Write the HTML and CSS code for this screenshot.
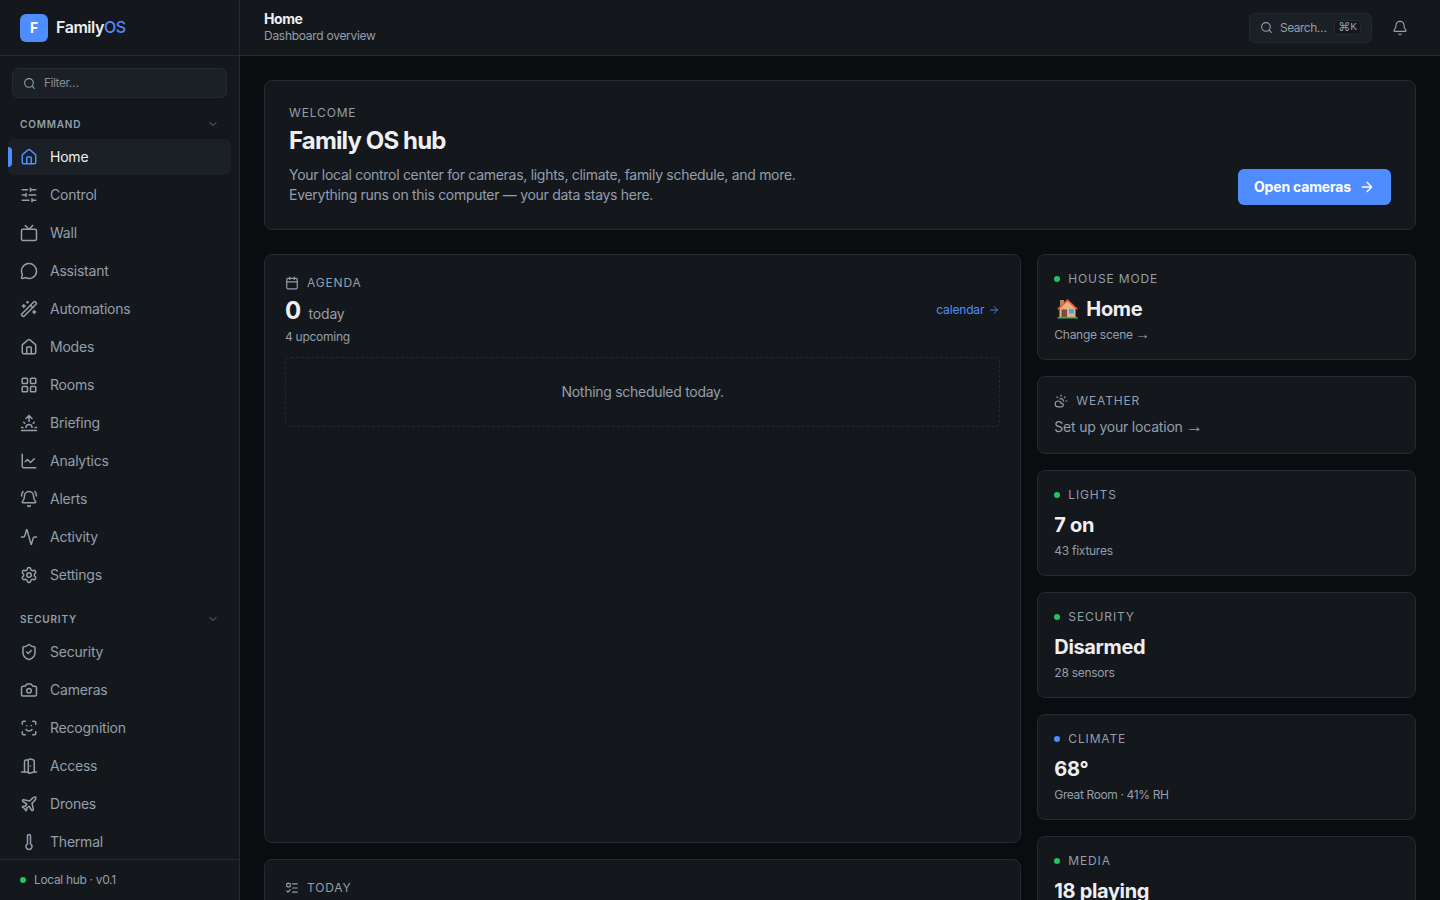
FILE: index.html
```html
<!DOCTYPE html>
<html lang="en">
<head>
<meta charset="utf-8">
<title>FamilyOS</title>
<link rel="stylesheet" href="styles.css">
</head>
<body>
<svg class="sprite" aria-hidden="true">
  <symbol id="search" viewBox="0 0 24 24"><path d="m21 21-4.34-4.34"/><circle cx="11" cy="11" r="8"/></symbol>
  <symbol id="chevron" viewBox="0 0 24 24"><path d="m6 9 6 6 6-6"/></symbol>
  <symbol id="arrow" viewBox="0 0 24 24"><path d="M5 12h14M12 5l7 7-7 7"/></symbol>
  <symbol id="bell" viewBox="0 0 24 24"><path d="M10.268 21a2 2 0 0 0 3.464 0"/><path d="M3.262 15.326A1 1 0 0 0 4 17h16a1 1 0 0 0 .74-1.673C19.41 13.956 18 12.499 18 8A6 6 0 0 0 6 8c0 4.499-1.411 5.956-2.738 7.326"/></symbol>
  <symbol id="house" viewBox="0 0 24 24"><path d="M15 21v-8a1 1 0 0 0-1-1h-4a1 1 0 0 0-1 1v8"/><path d="M3 10a2 2 0 0 1 .709-1.528l7-5.999a2 2 0 0 1 2.582 0l7 5.999A2 2 0 0 1 21 10v9a2 2 0 0 1-2 2H5a2 2 0 0 1-2-2z"/></symbol>
  <symbol id="sliders" viewBox="0 0 24 24"><path d="M10 5H3M12 19H3M14 3v4M16 17v4M21 12h-9M21 19h-5M21 5h-7M8 10v4M8 12H3"/></symbol>
  <symbol id="tv" viewBox="0 0 24 24"><path d="m17 2-5 5-5-5"/><rect x="2" y="7" width="20" height="15" rx="2"/></symbol>
  <symbol id="message" viewBox="0 0 24 24"><path d="M2.992 16.342a2 2 0 0 1 .094 1.167l-1.065 3.29a1 1 0 0 0 1.236 1.168l3.413-.998a2 2 0 0 1 1.099.092 10 10 0 1 0-4.777-4.719"/></symbol>
  <symbol id="wand" viewBox="0 0 24 24"><path d="m21.64 3.64-1.28-1.28a1.21 1.21 0 0 0-1.72 0L2.36 18.64a1.21 1.21 0 0 0 0 1.72l1.28 1.28a1.2 1.2 0 0 0 1.72 0L21.64 5.36a1.2 1.2 0 0 0 0-1.72"/><path d="m14 7 3 3M5 6v4M19 14v4M10 2v2M7 8H3M21 16h-4M11 3H9"/></symbol>
  <symbol id="grid" viewBox="0 0 24 24"><rect x="3" y="3" width="7" height="7" rx="1"/><rect x="14" y="3" width="7" height="7" rx="1"/><rect x="14" y="14" width="7" height="7" rx="1"/><rect x="3" y="14" width="7" height="7" rx="1"/></symbol>
  <symbol id="sunrise" viewBox="0 0 24 24"><path d="M12 2v8M4.93 10.93l1.41 1.41M2 18h2M20 18h2M19.07 10.93l-1.41 1.41M22 22H2M8 6l4-4 4 4M16 18a4 4 0 0 0-8 0"/></symbol>
  <symbol id="chart" viewBox="0 0 24 24"><path d="M3 3v16a2 2 0 0 0 2 2h16"/><path d="m19 9-5 5-4-4-3 3"/></symbol>
  <symbol id="bell-ring" viewBox="0 0 24 24"><path d="M10.268 21a2 2 0 0 0 3.464 0"/><path d="M22 8c0-2.3-.8-4.3-2-6"/><path d="M3.262 15.326A1 1 0 0 0 4 17h16a1 1 0 0 0 .74-1.673C19.41 13.956 18 12.499 18 8A6 6 0 0 0 6 8c0 4.499-1.411 5.956-2.738 7.326"/><path d="M4 2C2.8 3.7 2 5.7 2 8"/></symbol>
  <symbol id="activity" viewBox="0 0 24 24"><path d="M22 12h-2.48a2 2 0 0 0-1.93 1.46l-2.35 8.36a.25.25 0 0 1-.48 0L9.24 2.18a.25.25 0 0 0-.48 0l-2.35 8.36A2 2 0 0 1 4.49 12H2"/></symbol>
  <symbol id="settings" viewBox="0 0 24 24"><path d="M9.671 4.136a2.34 2.34 0 0 1 4.659 0 2.34 2.34 0 0 0 3.319 1.915 2.34 2.34 0 0 1 2.33 4.033 2.34 2.34 0 0 0 0 3.831 2.34 2.34 0 0 1-2.33 4.033 2.34 2.34 0 0 0-3.319 1.915 2.34 2.34 0 0 1-4.659 0 2.34 2.34 0 0 0-3.32-1.915 2.34 2.34 0 0 1-2.33-4.033 2.34 2.34 0 0 0 0-3.831A2.34 2.34 0 0 1 6.35 6.051a2.34 2.34 0 0 0 3.319-1.915"/><circle cx="12" cy="12" r="3"/></symbol>
  <symbol id="shield" viewBox="0 0 24 24"><path d="M20 13c0 5-3.5 7.5-7.66 8.95a1 1 0 0 1-.67-.01C7.5 20.5 4 18 4 13V6a1 1 0 0 1 1-1c2 0 4.5-1.2 6.24-2.72a1.17 1.17 0 0 1 1.52 0C14.51 3.81 17 5 19 5a1 1 0 0 1 1 1z"/><path d="m9 12 2 2 4-4"/></symbol>
  <symbol id="camera" viewBox="0 0 24 24"><path d="M13.997 4a2 2 0 0 1 1.76 1.05l.486.9A2 2 0 0 0 18.003 7H20a2 2 0 0 1 2 2v9a2 2 0 0 1-2 2H4a2 2 0 0 1-2-2V9a2 2 0 0 1 2-2h1.997a2 2 0 0 0 1.759-1.048l.489-.904A2 2 0 0 1 10.004 4z"/><circle cx="12" cy="13" r="3"/></symbol>
  <symbol id="scan-face" viewBox="0 0 24 24"><path d="M3 7V5a2 2 0 0 1 2-2h2M17 3h2a2 2 0 0 1 2 2v2M21 17v2a2 2 0 0 1-2 2h-2M7 21H5a2 2 0 0 1-2-2v-2M8 14s1.5 2 4 2 4-2 4-2M9 9h.01M15 9h.01"/></symbol>
  <symbol id="door" viewBox="0 0 24 24"><path d="M11 20H2"/><path d="M11 4.562v16.157a1 1 0 0 0 1.242.97L19 20V5.562a2 2 0 0 0-1.515-1.94l-4-1A2 2 0 0 0 11 4.561z"/><path d="M11 4H8a2 2 0 0 0-2 2v14M14 12h.01M22 20h-3"/></symbol>
  <symbol id="plane" viewBox="0 0 24 24"><path d="M17.8 19.2 16 11l3.5-3.5C21 6 21.5 4 21 3c-1-.5-3 0-4.5 1.5L13 8 4.8 6.2c-.5-.1-.9.1-1.1.5l-.3.5c-.2.5-.1 1 .3 1.3L9 12l-2 3H4l-1 1 3 2 2 3 1-1v-3l3-2 3.5 5.3c.3.4.8.5 1.3.3l.5-.2c.4-.3.6-.7.5-1.2z"/></symbol>
  <symbol id="thermometer" viewBox="0 0 24 24"><path d="M14 4v10.54a4 4 0 1 1-4 0V4a2 2 0 0 1 4 0Z"/></symbol>
  <symbol id="calendar" viewBox="0 0 24 24"><path d="M8 2v4M16 2v4"/><rect x="3" y="4" width="18" height="18" rx="2"/><path d="M3 10h18"/></symbol>
  <symbol id="cloud-sun" viewBox="0 0 24 24"><path d="M12 2v2M4.93 4.93l1.41 1.41M20 12h2M19.07 4.93l-1.41 1.41"/><path d="M15.947 12.65a4 4 0 0 0-5.925-4.128"/><path d="M13 22H7a5 5 0 1 1 4.9-6H13a3 3 0 0 1 0 6Z"/></symbol>
  <symbol id="list-todo" viewBox="0 0 24 24"><path d="M13 5h8M13 12h8M13 19h8M3 17l2 2 4-4"/><rect x="3" y="4" width="6" height="6" rx="1"/></symbol>
</svg>
<div class="app">
  <aside class="sidebar">
    <div class="brand"><span class="logo">F</span><span class="brand-name">Family<span class="brand-os">OS</span></span></div>
    <div class="filter"><svg class="icon icon-filter"><use href="#search"/></svg><span>Filter…</span></div>
    <nav class="nav">
      <div class="group-head"><span>COMMAND</span><svg class="icon icon-chevron"><use href="#chevron"/></svg></div>
      <a class="nav-item active"><svg class="icon"><use href="#house"/></svg>Home</a>
      <a class="nav-item"><svg class="icon"><use href="#sliders"/></svg>Control</a>
      <a class="nav-item"><svg class="icon"><use href="#tv"/></svg>Wall</a>
      <a class="nav-item"><svg class="icon"><use href="#message"/></svg>Assistant</a>
      <a class="nav-item"><svg class="icon"><use href="#wand"/></svg>Automations</a>
      <a class="nav-item"><svg class="icon"><use href="#house"/></svg>Modes</a>
      <a class="nav-item"><svg class="icon"><use href="#grid"/></svg>Rooms</a>
      <a class="nav-item"><svg class="icon"><use href="#sunrise"/></svg>Briefing</a>
      <a class="nav-item"><svg class="icon"><use href="#chart"/></svg>Analytics</a>
      <a class="nav-item"><svg class="icon"><use href="#bell-ring"/></svg>Alerts</a>
      <a class="nav-item"><svg class="icon"><use href="#activity"/></svg>Activity</a>
      <a class="nav-item"><svg class="icon"><use href="#settings"/></svg>Settings</a>
      <div class="group-head"><span>SECURITY</span><svg class="icon icon-chevron"><use href="#chevron"/></svg></div>
      <a class="nav-item"><svg class="icon"><use href="#shield"/></svg>Security</a>
      <a class="nav-item"><svg class="icon"><use href="#camera"/></svg>Cameras</a>
      <a class="nav-item"><svg class="icon"><use href="#scan-face"/></svg>Recognition</a>
      <a class="nav-item"><svg class="icon"><use href="#door"/></svg>Access</a>
      <a class="nav-item"><svg class="icon"><use href="#plane"/></svg>Drones</a>
      <a class="nav-item"><svg class="icon"><use href="#thermometer"/></svg>Thermal</a>
    </nav>
    <div class="side-foot"><i class="dot"></i><span>Local hub · v0.1</span></div>
  </aside>
  <div class="page">
    <header class="topbar">
      <div><div class="page-title">Home</div><div class="page-sub">Dashboard overview</div></div>
      <div class="top-actions">
        <div class="search"><svg class="icon icon-search"><use href="#search"/></svg><span>Search…</span><kbd class="kbd"><span class="cmd">⌘</span>K</kbd></div>
        <svg class="icon icon-bell"><use href="#bell"/></svg>
      </div>
    </header>
    <main class="main">
      <section class="card hero">
        <div>
          <div class="label">WELCOME</div>
          <h1 class="hero-title">Family OS hub</h1>
          <p class="hero-text">Your local control center for cameras, lights, climate, family schedule, and more.<br>Everything runs on this computer — your data stays here.</p>
        </div>
        <a class="button"><span>Open cameras</span><svg class="icon icon-button"><use href="#arrow"/></svg></a>
      </section>
      <div class="columns">
        <div class="stack">
          <section class="card agenda">
            <div class="agenda-head">
              <div>
                <div class="label label-icon"><svg class="icon icon-label"><use href="#calendar"/></svg>AGENDA</div>
                <div class="count">0<span class="count-unit">today</span></div>
                <div class="sub upcoming">4 upcoming</div>
              </div>
              <a class="link">calendar<svg class="icon icon-link"><use href="#arrow"/></svg></a>
            </div>
            <div class="empty">Nothing scheduled today.</div>
          </section>
          <section class="card today"><div class="label label-icon"><svg class="icon icon-label"><use href="#list-todo"/></svg>TODAY</div></section>
        </div>
        <div class="stack">
          <section class="card tile">
            <div class="label label-dot"><i class="dot"></i>HOUSE MODE</div>
            <div class="value value-home">
              <svg class="house-color" viewBox="0 0 21 20" role="img" aria-label="House">
                <path fill="#b98563" d="M3 1h4v8H3z"/>
                <path fill="#e9b083" d="M2.5 9.5 10.5 2l8 7.5V18h-16z"/>
                <path fill="#7b4d42" d="M4.5 10.5h5.5V18H4.5z"/>
                <path fill="#2fa8ee" d="M12 10.2h4.8v4.2H12z"/>
                <path fill="none" stroke="#ec5a3c" stroke-width="1.6" stroke-linecap="round" stroke-linejoin="round" d="m1.3 9.8 9.2-8.6 9.2 8.6"/>
                <path fill="#35b35e" d="M.5 17.9h20v1.6H.5z"/>
              </svg>
              <span>Home</span>
            </div>
            <div class="sub">Change scene <span class="text-arrow">→</span></div>
          </section>
          <section class="card tile"><div class="label label-icon"><svg class="icon icon-label"><use href="#cloud-sun"/></svg>WEATHER</div><div class="setup">Set up your location <span class="text-arrow">→</span></div></section>
          <section class="card tile"><div class="label label-dot"><i class="dot"></i>LIGHTS</div><div class="value">7 on</div><div class="sub">43 fixtures</div></section>
          <section class="card tile"><div class="label label-dot"><i class="dot"></i>SECURITY</div><div class="value">Disarmed</div><div class="sub">28 sensors</div></section>
          <section class="card tile"><div class="label label-dot"><i class="dot dot-blue"></i>CLIMATE</div><div class="value">68°</div><div class="sub sub-room">Great Room · 41% RH</div></section>
          <section class="card tile tile-media"><div class="label label-dot"><i class="dot"></i>MEDIA</div><div class="value">18 playing</div></section>
        </div>
      </div>
    </main>
  </div>
</div>
</body>
</html>
```
FILE: styles.css
```css
:root {
  --bg: #0a0c0f;
  --surface: #14171c;
  --raised: #1b2026;
  --border: #242a31;
  --text: #edeff2;
  --muted: #939fab;
  --accent: #4f8cff;
  --green: #22c55e;
}
* { box-sizing: border-box; }
body {
  margin: 0;
  background: var(--bg);
  color: var(--text);
  font: 14px/20px Inter, "Liberation Sans", sans-serif;
}
.sprite { display: none; }
.app { display: flex; height: 100vh; overflow: hidden; }
.icon {
  width: 18px; height: 18px; flex: none;
  fill: none; stroke: currentColor; stroke-width: 2;
  stroke-linecap: round; stroke-linejoin: round;
}
.dot { width: 6px; height: 6px; border-radius: 50%; background: var(--green); flex: none; }
.dot-blue { background: var(--accent); }

.sidebar {
  width: 240px; flex: none; display: flex; flex-direction: column;
  background: var(--surface); border-right: 1px solid var(--border);
}
.brand {
  height: 56px; flex: none; display: flex; align-items: center; gap: 8px;
  padding: 0 20px; border-bottom: 1px solid var(--border);
}
.logo {
  width: 28px; height: 28px; border-radius: 6px; background: var(--accent);
  color: #fff; font-weight: 700; line-height: 28px; text-align: center;
}
.brand-name { padding-bottom: 1px; font-size: 16px; font-weight: 600; letter-spacing: -0.45px; }
.brand-os { color: var(--accent); font-weight: 500; }
.filter {
  margin: 12px 12px 0; height: 30px; flex: none; display: flex; align-items: center; gap: 8px;
  padding: 0 10px; border: 1px solid var(--border); border-radius: 6px;
  background: var(--raised); color: #858b93; font-size: 12px; letter-spacing: -.5px;
}
.icon-filter, .icon-search { width: 13px; height: 13px; color: var(--muted); }
.nav { flex: 1; min-height: 0; overflow: hidden; padding: 11px 8px 0; }
.group-head {
  height: 30px; display: flex; align-items: center; justify-content: space-between;
  padding: 0 12px; color: var(--muted); font-size: 10px; font-weight: 600; letter-spacing: .8px;
}
.nav-item + .group-head { margin-top: 11px; }
.icon-chevron { width: 12px; height: 12px; opacity: .7; }
.nav-item {
  position: relative; height: 36px; margin-bottom: 2px; display: flex; align-items: center;
  gap: 12px; padding: 0 12px; border-radius: 6px; color: var(--muted); letter-spacing: -.22px;
}
.active { background: var(--raised); color: var(--text); }
.active .icon { color: var(--accent); }
.active::before {
  content: ""; position: absolute; left: 0; top: 8px; width: 4px; height: 20px;
  border-radius: 0 4px 4px 0; background: var(--accent);
}
.side-foot {
  height: 41px; flex: none; display: flex; align-items: center; gap: 8px; padding: 0 20px;
  border-top: 1px solid var(--border); color: var(--muted); font-size: 12px; letter-spacing: -.33px;
}

.page { flex: 1; min-width: 0; display: flex; flex-direction: column; }
.topbar {
  height: 56px; flex: none; display: flex; align-items: center; justify-content: space-between;
  padding: 0 24px; background: var(--surface); border-bottom: 1px solid var(--border);
}
.page-title { font-weight: 700; line-height: 16px; letter-spacing: -.4px; }
.page-sub { color: var(--muted); font-size: 12px; line-height: 17px; letter-spacing: -.28px; }
.top-actions { display: flex; align-items: center; gap: 20px; padding-right: 8px; }
.search {
  width: 123px; height: 30px; display: flex; align-items: center; padding: 0 10px;
  border: 1px solid var(--border); border-radius: 6px; background: var(--raised);
  color: var(--muted); font-size: 12px;
}
.search > span { margin-left: 7px; letter-spacing: -.5px; }
.kbd {
  margin-left: auto; width: 27px; height: 15px; display: flex; align-items: center; justify-content: center;
  border: 1px solid var(--border); border-radius: 4px; background: var(--surface);
  font: 11px/13px "Liberation Mono", monospace;
}
.cmd { font: 12px/13px "DejaVu Sans", sans-serif; }
.icon-bell { width: 16px; height: 16px; color: var(--muted); stroke-width: 1.75; }

.main { flex: 1; min-height: 0; overflow: hidden; padding: 24px; }
.card { background: var(--surface); border: 1px solid var(--border); border-radius: 8px; }
.label { color: var(--muted); font-size: 12px; line-height: 16px; letter-spacing: .85px; }
.label-icon, .label-dot { display: flex; align-items: center; gap: 8px; }
.icon-label { width: 14px; height: 14px; }
.sub { color: var(--muted); font-size: 12px; line-height: 16px; letter-spacing: -.27px; }
.sub-room { letter-spacing: -.37px; }
.text-arrow { font-family: "Liberation Sans", sans-serif; font-size: 1.25em; line-height: 0; margin-left: -1px; }

.hero { height: 150px; padding: 24px; display: flex; align-items: flex-end; justify-content: space-between; }
.hero-title { margin: 4px 0 8px; font-size: 24px; line-height: 32px; font-weight: 700; letter-spacing: -.87px; }
.hero-text { margin: 0; color: var(--muted); letter-spacing: -.29px; }
.button {
  height: 36px; width: 153px; display: flex; align-items: center; justify-content: space-between;
  padding: 0 16px; border-radius: 6px; background: var(--accent); color: #fff;
  font-weight: 700; letter-spacing: -.18px;
}
.icon-button { width: 16px; height: 16px; }

.columns { margin-top: 24px; display: grid; grid-template-columns: 2fr 1fr; gap: 16px; }
.stack { display: flex; flex-direction: column; gap: 16px; min-width: 0; }
.agenda { height: 589px; padding: 20px; flex: none; }
.agenda-head { display: flex; align-items: center; justify-content: space-between; }
.count { margin-top: 4px; height: 32px; font-size: 24px; line-height: 32px; font-weight: 700; letter-spacing: -.6px; }
.count-unit { margin-left: 8px; font-size: 14px; line-height: 20px; font-weight: 400; letter-spacing: -.2px; color: var(--muted); }
.upcoming { margin-top: 2px; }
.link { display: flex; align-items: center; gap: 4px; color: var(--accent); font-size: 12px; line-height: 16px; letter-spacing: -.15px; }
.icon-link { width: 12px; height: 12px; opacity: .85; }
.empty {
  margin-top: 12px; padding: 24px; text-align: center; color: var(--muted); letter-spacing: -.28px;
  border: 1px dashed var(--border); border-radius: 6px;
}
.today { height: 200px; padding: 20px; }
.tile { padding: 16px; flex: none; }
.tile-media { height: 106px; }
.value { margin: 8px 0 4px; font-size: 20px; line-height: 28px; font-weight: 700; letter-spacing: -.35px; }
.value-home { display: flex; align-items: center; gap: 8px; padding-left: 3px; }
.house-color { width: 21px; height: 20px; flex: none; }
.setup { margin-top: 8px; color: var(--muted); letter-spacing: -.2px; }
```
